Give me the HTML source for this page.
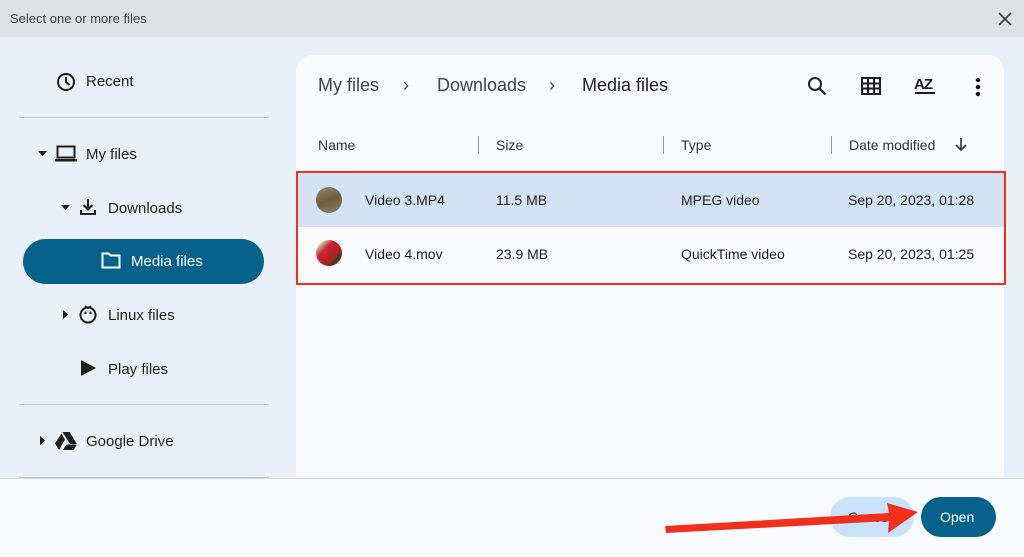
<!DOCTYPE html><html><head><style>
body{margin:0;width:1024px;height:556px;overflow:hidden;font-family:"Liberation Sans",sans-serif;background:#fff;position:relative;color:#1f1f1f}
.a{position:absolute}
.t{font-size:15px;color:#1f1f1f}
.hr{position:absolute;left:19px;width:250px;height:1px;background:#c4c7cc}
svg{position:absolute}
</style></head><body>
<div class="a" style="left:0;top:0;width:1024px;height:37px;background:#dfe1e4"></div>
<div class="a" style="left:10px;top:11px;font-size:13px;color:#3c3c3c">Select one or more files</div>
<svg style="left:997px;top:11px" width="16" height="16"><path d="M2 2L14 14M14 2L2 14" stroke="#444" stroke-width="1.8"/></svg>
<div class="a" style="left:0;top:37px;width:1024px;height:441px;background:#e9f0f8"></div>
<div class="a" style="left:296px;top:55px;width:708px;height:423px;background:#f8fafd;border-top-left-radius:16px;border-top-right-radius:16px"></div>
<div class="a" style="left:0;top:478px;width:1024px;height:78px;background:#f8fafd;border-top:1px solid #d5d8dc"></div>
<!-- sidebar -->
<svg style="left:56px;top:72px" width="20" height="20"><circle cx="10" cy="10" r="8" fill="none" stroke="#1f1f1f" stroke-width="2"/><path d="M10 5v5l3.5 3" fill="none" stroke="#1f1f1f" stroke-width="2"/></svg>
<div class="a t" style="left:86px;top:73px">Recent</div>
<div class="hr" style="top:117px"></div>
<svg style="left:38px;top:150px" width="10" height="8"><path d="M0 1h9L4.5 6z" fill="#1f1f1f"/></svg>
<svg style="left:55px;top:145px" width="22" height="18"><rect x="2.5" y="1.5" width="17" height="11" fill="none" stroke="#1f1f1f" stroke-width="2"/><rect x="0" y="14" width="22" height="2.5" fill="#1f1f1f"/></svg>
<div class="a t" style="left:86px;top:146px">My files</div>
<svg style="left:61px;top:204px" width="10" height="8"><path d="M0 1h9L4.5 6z" fill="#1f1f1f"/></svg>
<svg style="left:79px;top:198px" width="18" height="18"><path d="M9 1v10M4.5 7l4.5 4.5 4.5-4.5M2 12v4h14v-4" fill="none" stroke="#1f1f1f" stroke-width="2"/></svg>
<div class="a t" style="left:108px;top:200px">Downloads</div>
<div class="a" style="left:23px;top:239px;width:241px;height:45px;background:#06628a;border-radius:23px"></div>
<svg style="left:101px;top:252px" width="20" height="17"><path d="M1.5 1.5h6l2 2h9v12h-17z" fill="none" stroke="#fff" stroke-width="2"/></svg>
<div class="a t" style="left:131px;top:253px;color:#fff">Media files</div>
<svg style="left:62px;top:310px" width="8" height="10"><path d="M1 0v9l5-4.5z" fill="#1f1f1f"/></svg>
<svg style="left:78px;top:304px" width="20" height="20"><circle cx="10" cy="11" r="7.5" fill="none" stroke="#1f1f1f" stroke-width="2"/><circle cx="7.5" cy="9" r="1.2" fill="#1f1f1f"/><circle cx="12.5" cy="9" r="1.2" fill="#1f1f1f"/><path d="M7 2l3 2 3-2" fill="none" stroke="#1f1f1f" stroke-width="1.8"/></svg>
<div class="a t" style="left:108px;top:307px">Linux files</div>
<svg style="left:80px;top:359px" width="18" height="18"><path d="M1 1l15 8-15 8z" fill="#1f1f1f"/></svg>
<div class="a t" style="left:108px;top:361px">Play files</div>
<div class="hr" style="top:404px"></div>
<svg style="left:39px;top:436px" width="8" height="10"><path d="M1 0v9l5-4.5z" fill="#1f1f1f"/></svg>
<svg style="left:55px;top:432px" width="22" height="18"><path d="M7.5 0h7l7.5 12h-7zM6.5 1.5l3.5 6-6 10.5-4-6.5zM8 18l3.5-5.5h10.5l-3.5 5.5z" fill="#1f1f1f"/></svg>
<div class="a t" style="left:86px;top:433px">Google Drive</div>
<div class="hr" style="top:477px"></div>
<!-- breadcrumb -->
<div class="a" style="left:318px;top:75px;font-size:18px;color:#444">My files</div>
<div class="a" style="left:403px;top:75px;font-size:18px;color:#444">›</div>
<div class="a" style="left:437px;top:75px;font-size:18px;color:#444">Downloads</div>
<div class="a" style="left:549px;top:75px;font-size:18px;color:#444">›</div>
<div class="a" style="left:582px;top:75px;font-size:18px;color:#1f1f1f">Media files</div>
<svg style="left:807px;top:76px" width="20" height="20"><circle cx="8" cy="8" r="6" fill="none" stroke="#1f1f1f" stroke-width="2"/><path d="M12.5 12.5l6 6" stroke="#1f1f1f" stroke-width="2.2"/></svg>
<svg style="left:861px;top:77px" width="20" height="18"><rect x="1" y="1" width="18" height="16" fill="none" stroke="#1f1f1f" stroke-width="2"/><path d="M7 1v16M13 1v16M1 6.5h18M1 11.5h18" stroke="#1f1f1f" stroke-width="2"/></svg>
<div class="a" style="left:914px;top:76px;font-size:15px;font-weight:bold;letter-spacing:-1px">AZ</div>
<div class="a" style="left:915px;top:92px;width:20px;height:2px;background:#1f1f1f"></div>
<svg style="left:975px;top:77px" width="6" height="20"><circle cx="3" cy="3" r="2.2"/><circle cx="3" cy="10" r="2.2"/><circle cx="3" cy="17" r="2.2"/></svg>
<!-- header -->
<div class="a" style="left:318px;top:137px;font-size:14px;color:#333">Name</div>
<div class="a" style="left:478px;top:136px;width:1px;height:18px;background:#999"></div>
<div class="a" style="left:496px;top:137px;font-size:14px;color:#333">Size</div>
<div class="a" style="left:663px;top:136px;width:1px;height:18px;background:#999"></div>
<div class="a" style="left:681px;top:137px;font-size:14px;color:#333">Type</div>
<div class="a" style="left:831px;top:136px;width:1px;height:18px;background:#999"></div>
<div class="a" style="left:849px;top:137px;font-size:14px;color:#333">Date modified</div>
<svg style="left:955px;top:138px" width="12" height="14"><path d="M6 0v12M1 7l5 5 5-5" fill="none" stroke="#333" stroke-width="1.6"/></svg>
<!-- rows -->
<div class="a" style="left:298px;top:173px;width:706px;height:54px;background:#d3e3f3"></div>
<div class="a" style="left:316px;top:187px;width:26px;height:26px;border-radius:50%;background:linear-gradient(160deg,#9a8c6a,#6e5b3f 50%,#8f8a5c)"></div>
<div class="a" style="left:365px;top:192px;font-size:14px">Video 3.MP4</div>
<div class="a" style="left:496px;top:192px;font-size:14px">11.5 MB</div>
<div class="a" style="left:681px;top:192px;font-size:14px">MPEG video</div>
<div class="a" style="left:848px;top:192px;font-size:14px">Sep 20, 2023, 01:28</div>
<div class="a" style="left:316px;top:240px;width:26px;height:26px;border-radius:50%;background:linear-gradient(135deg,#c9d2c0 15%,#c8262c 35%,#b02024 65%,#3a3a2a 80%,#9aa080)"></div>
<div class="a" style="left:365px;top:246px;font-size:14px">Video 4.mov</div>
<div class="a" style="left:496px;top:246px;font-size:14px">23.9 MB</div>
<div class="a" style="left:681px;top:246px;font-size:14px">QuickTime video</div>
<div class="a" style="left:848px;top:246px;font-size:14px">Sep 20, 2023, 01:25</div>
<div class="a" style="left:296px;top:171px;width:706px;height:110px;border:2px solid #f0301c"></div>
<!-- buttons -->
<div class="a" style="left:830px;top:497px;width:84px;height:40px;border-radius:20px;background:#c8e3fb"></div>
<div class="a" style="left:848px;top:509px;font-size:14px;color:#1f1f1f">Cancel</div>
<div class="a" style="left:921px;top:497px;width:75px;height:40px;border-radius:20px;background:#06628a"></div>
<div class="a" style="left:940px;top:509px;font-size:14px;color:#fff">Open</div>
<svg style="left:660px;top:495px" width="265" height="45"><path d="M5 31L229 18L227 8L258 17L228 38L229 26L6 38z" fill="#f0301c"/></svg>
</body></html>
